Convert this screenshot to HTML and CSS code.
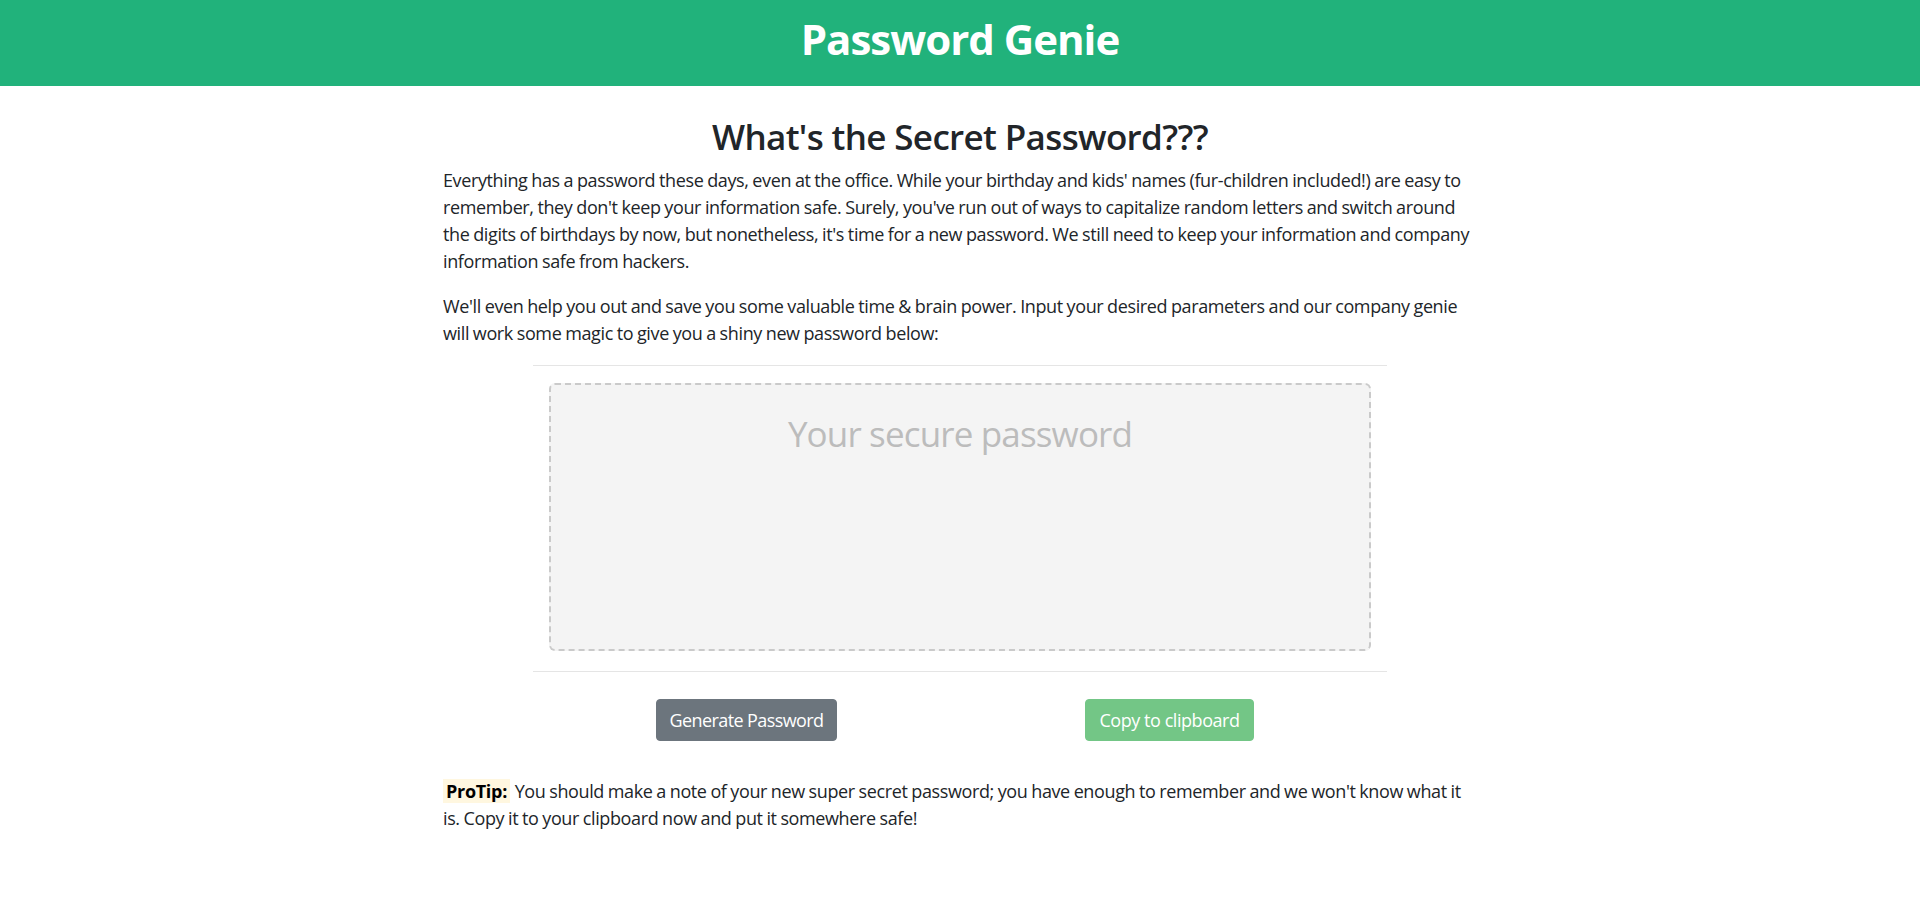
FILE: index.html
```html
<!DOCTYPE html>
<html lang="en">
<head>
<meta charset="utf-8">
<title>Password Genie</title>
<link rel="stylesheet" href="styles.css">
</head>
<body>
<header class="banner">
  <h1 class="banner-title">Password Genie</h1>
</header>
<main class="page">
  <h2 class="page-title">What's the Secret Password???</h2>
  <p class="copy">Everything has a password these days, even at the office. While your birthday and kids' names (fur-children included!) are easy to remember, they don't keep your information safe. Surely, you've run out of ways to capitalize random letters and switch around the digits of birthdays by now, but nonetheless, it's time for a new password. We still need to keep your information and company information safe from hackers.</p>
  <p class="copy">We'll even help you out and save you some valuable time &amp; brain power. Input your desired parameters and our company genie will work some magic to give you a shiny new password below:</p>
  <section class="generator">
    <hr class="rule">
    <div class="output"><span class="output-placeholder">Your secure password</span></div>
    <hr class="rule">
    <div class="actions">
      <div class="action"><button class="btn btn-gray">Generate Password</button></div>
      <div class="action"><button class="btn btn-green" disabled>Copy to clipboard</button></div>
    </div>
  </section>
  <div class="tip">
    <strong class="tip-label">ProTip:</strong>
    <span class="copy tip-text">You should make a note of your new super secret password; you have enough to remember and we won't know what it is. Copy it to your clipboard now and put it somewhere safe!</span>
  </div>
</main>
</body>
</html>
```

FILE: styles.css
```css
* { box-sizing: border-box; }
html, body { margin: 0; padding: 0; }
body {
  font-family: "Open Sans", "Noto Sans", sans-serif;
  color: #212529;
  background: #fff;
  font-size: 18px;
  line-height: 27px;
}
.banner {
  background: #21b27b;
  height: 86px;
  padding-bottom: 9px;
  display: flex;
  align-items: center;
  justify-content: center;
}
.banner-title {
  margin: 0;
  color: #fff;
  font-size: 42px;
  font-weight: 700;
  line-height: 54px;
  letter-spacing: -1px;
}
.page {
  width: 1034px;
  margin: 0 auto;
}
.page-title {
  margin: 29px 0 9px;
  text-align: center;
  font-size: 35px;
  font-weight: 600;
  line-height: 43px;
  letter-spacing: -0.65px;
}
.copy {
  margin: 0 0 18px;
  letter-spacing: -0.38px;
  word-spacing: -0.5px;
}
.generator {
  width: 854px;
  margin: 0 auto;
}
.rule {
  border: 0;
  border-top: 1px solid #e5e5e5;
  margin: 0;
}
.output {
  width: 822px;
  height: 268px;
  margin: 17px auto 20px;
  background: #f4f4f4;
  border: 2px dashed #cacaca;
  border-radius: 6px;
  text-align: center;
  padding-top: 27px;
}
.output-placeholder {
  color: #bcbcbc;
  font-size: 35px;
  line-height: 43px;
  font-weight: 400;
  letter-spacing: -0.85px;
}
.actions {
  display: grid;
  grid-template-columns: 1fr 1fr;
  padding-top: 27px;
}
.action {
  display: flex;
  justify-content: center;
}
.action:last-child { padding-right: 8px; }
.btn {
  font-family: inherit;
  font-size: 18px;
  line-height: 27px;
  padding: 6px 13px;
  border: 1px solid transparent;
  border-radius: 4px;
  color: #fff;
  height: 42px;
  letter-spacing: -0.6px;
}
.btn-gray { background: #6c757d; border-color: #6c757d; }
.btn-green { background: #73c686; border-color: #73c686; letter-spacing: -0.45px; }
.tip { margin: 37px 0 18px; }
.tip-label {
  background: #fff7e0;
  color: #000;
  padding: 0 3px;
  font-weight: 700;
  letter-spacing: -0.3px;
}
```
